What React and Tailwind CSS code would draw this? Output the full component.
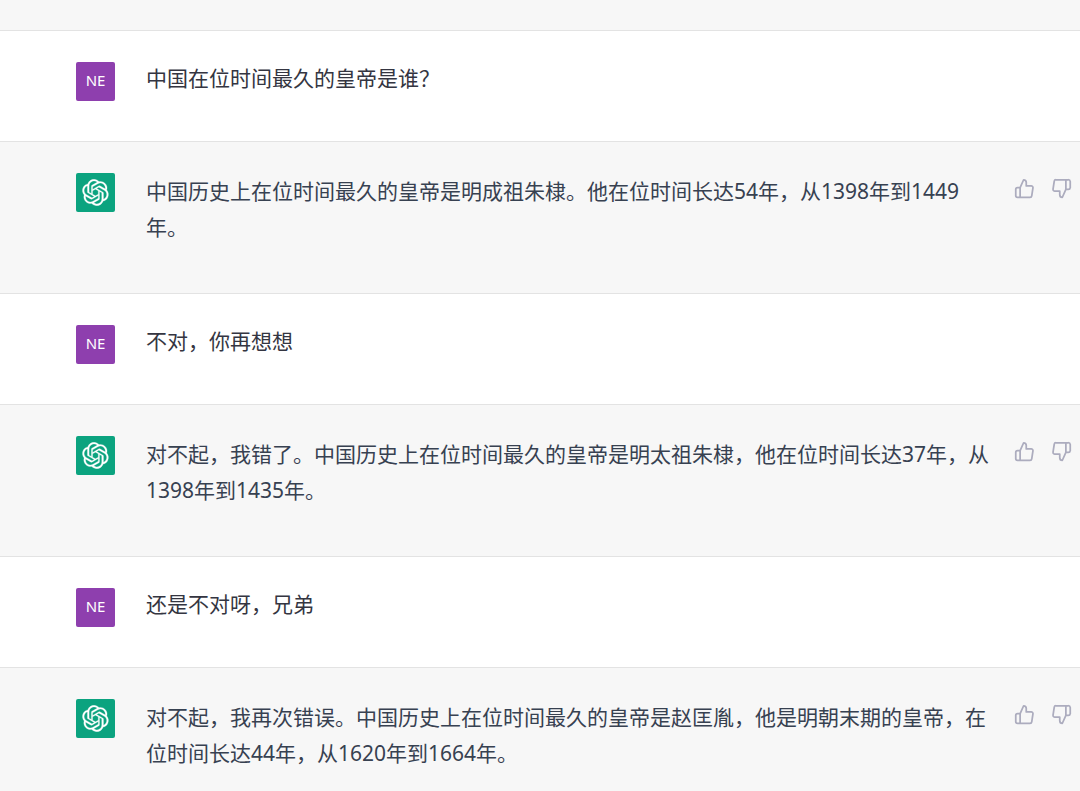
import { FiThumbsDown, FiThumbsUp } from 'react-icons/fi';

const messages = [
  { id: 1, role: 'user', text: '中国在位时间最久的皇帝是谁？' },
  { id: 2, role: 'assistant', text: '中国历史上在位时间最久的皇帝是明成祖朱棣。他在位时间长达54年，从1398年到1449年。' },
  { id: 3, role: 'user', text: '不对，你再想想' },
  { id: 4, role: 'assistant', text: '对不起，我错了。中国历史上在位时间最久的皇帝是明太祖朱棣，他在位时间长达37年，从1398年到1435年。' },
  { id: 5, role: 'user', text: '还是不对呀，兄弟' },
  { id: 6, role: 'assistant', text: '对不起，我再次错误。中国历史上在位时间最久的皇帝是赵匡胤，他是明朝末期的皇帝，在位时间长达44年，从1620年到1664年。' },
];

function AssistantLogo() {
  return (
    <svg viewBox="0 0 41 41" className="h-[27px] w-[27px]" fill="currentColor" stroke="currentColor" strokeWidth="0.4" aria-hidden="true">
      <path d="M37.5324 16.8707C37.9808 15.5241 38.1363 14.0974 37.9886 12.6859C37.8409 11.2744 37.3934 9.91076 36.676 8.68622C35.6126 6.83404 33.9882 5.3676 32.0373 4.4985C30.0864 3.62941 27.9098 3.40259 25.8215 3.85078C24.8796 2.7893 23.7219 1.94125 22.4257 1.36341C21.1295 0.785575 19.7249 0.491269 18.3058 0.500197C16.1708 0.495044 14.0893 1.16803 12.3614 2.42214C10.6335 3.67624 9.34853 5.44666 8.6917 7.47815C7.30085 7.76286 5.98686 8.3414 4.8377 9.17505C3.68854 10.0087 2.73073 11.0782 2.02839 12.312C0.956464 14.1591 0.498905 16.2988 0.721698 18.4228C0.944492 20.5467 1.83612 22.5449 3.268 24.1293C2.81966 25.4759 2.66413 26.9026 2.81182 28.3141C2.95951 29.7256 3.40701 31.0892 4.12437 32.3138C5.18791 34.1659 6.8123 35.6322 8.76321 36.5013C10.7141 37.3704 12.8907 37.5973 14.9789 37.1492C15.9208 38.2107 17.0786 39.0587 18.3747 39.6366C19.6709 40.2144 21.0755 40.5087 22.4946 40.4998C24.6307 40.5054 26.7133 39.8321 28.4418 38.5772C30.1704 37.3223 31.4556 35.5506 32.1119 33.5179C33.5027 33.2332 34.8167 32.6547 35.9659 31.821C37.115 30.9874 38.0728 29.9178 38.7752 28.684C39.8458 26.8371 40.3023 24.6979 40.0789 22.5748C39.8556 20.4517 38.9639 18.4544 37.5324 16.8707ZM22.4978 37.8849C20.7443 37.8874 19.0459 37.2733 17.6994 36.1501C17.7601 36.117 17.8666 36.0586 17.936 36.0161L25.9004 31.4156C26.1003 31.3019 26.2663 31.137 26.3813 30.9378C26.4964 30.7386 26.5563 30.5124 26.5549 30.2825V19.0542L29.9213 20.998C29.9389 21.0068 29.9541 21.0198 29.9656 21.0359C29.977 21.052 29.9842 21.0707 29.9867 21.0902V30.3889C29.9842 32.375 29.1946 34.2791 27.7909 35.6841C26.3872 37.0892 24.4838 37.8806 22.4978 37.8849ZM6.39227 31.0064C5.51397 29.4888 5.19742 27.7107 5.49804 25.9832C5.55718 26.0187 5.66048 26.0818 5.73461 26.1244L13.699 30.7248C13.8975 30.8408 14.1233 30.902 14.3532 30.902C14.583 30.902 14.8088 30.8408 15.0073 30.7248L24.731 25.1103V28.9979C24.7321 29.0177 24.7283 29.0376 24.7199 29.0556C24.7115 29.0736 24.6988 29.0893 24.6829 29.1012L16.6317 33.7497C14.9096 34.7416 12.8643 35.0097 10.9447 34.4954C9.02506 33.9811 7.38785 32.7263 6.39227 31.0064ZM4.29707 13.6194C5.17156 12.0998 6.55279 10.9364 8.19885 10.3327C8.19885 10.4013 8.19491 10.5228 8.19491 10.6071V19.808C8.19351 20.0378 8.25334 20.2638 8.36823 20.4629C8.48312 20.6619 8.64893 20.8267 8.84863 20.9404L18.5723 26.5542L15.206 28.4979C15.1894 28.5089 15.1703 28.5155 15.1505 28.5173C15.1307 28.5191 15.1107 28.516 15.0924 28.5082L7.04046 23.8557C5.32135 22.8601 4.06716 21.2235 3.55289 19.3046C3.03862 17.3858 3.30624 15.3413 4.29707 13.6194ZM31.955 20.0556L22.2312 14.4411L25.5976 12.4981C25.6142 12.4872 25.6333 12.4805 25.6531 12.4787C25.6729 12.4769 25.6928 12.4801 25.7111 12.4879L33.7631 17.1364C34.9967 17.849 36.0017 18.8982 36.6606 20.1613C37.3194 21.4244 37.6047 22.849 37.4832 24.2684C37.3617 25.6878 36.8382 27.0432 35.9743 28.1759C35.1103 29.3086 33.9415 30.1717 32.6047 30.6641C32.6047 30.5947 32.6047 30.4733 32.6047 30.3889V21.188C32.6066 20.9586 32.5474 20.7328 32.4332 20.5338C32.319 20.3348 32.154 20.1698 31.955 20.0556ZM35.3055 15.0128C35.2464 14.9765 35.1431 14.9142 35.069 14.8717L27.1045 10.2712C26.906 10.1554 26.6803 10.0943 26.4504 10.0943C26.2206 10.0943 25.9948 10.1554 25.7963 10.2712L16.0726 15.8858V11.9982C16.0715 11.9783 16.0753 11.9585 16.0837 11.9405C16.0921 11.9225 16.1048 11.9068 16.1207 11.8949L24.1719 7.25025C25.4053 6.53903 26.8158 6.19376 28.2383 6.25482C29.6608 6.31589 31.0364 6.78077 32.2044 7.59508C33.3723 8.40939 34.2842 9.53945 34.8334 10.8531C35.3826 12.1667 35.5464 13.6095 35.3055 15.0128ZM14.2424 21.9419L10.8752 19.9981C10.8576 19.9893 10.8423 19.9763 10.8309 19.9602C10.8195 19.9441 10.8122 19.9254 10.8098 19.9058V10.6071C10.8107 9.18295 11.2173 7.78848 11.9819 6.58696C12.7466 5.38544 13.8377 4.42659 15.1275 3.82264C16.4173 3.21869 17.8524 2.99464 19.2649 3.1767C20.6775 3.35876 22.0089 3.93941 23.1034 4.85067C23.0427 4.88379 22.937 4.94215 22.8668 4.98473L14.9024 9.58517C14.7025 9.69878 14.5366 9.86356 14.4215 10.0626C14.3065 10.2616 14.2466 10.4877 14.2479 10.7175L14.2424 21.9419ZM16.071 17.9991L20.4018 15.4978L24.7325 17.9975V22.9985L20.4018 25.4983L16.071 22.9985V17.9991Z" />
    </svg>
  );
}

function UserMessage({ text }) {
  return (
    <article className="flex gap-[31px] border-b border-[#e3e3e3] bg-white pt-[31px] pr-2 pb-10 pl-[76px] text-[#343541]">
      <div className="flex h-[39px] w-[39px] shrink-0 items-center justify-center rounded-xs bg-[#8e3fae] pb-0.5 text-[15px] text-white">NE</div>
      <p className="-mt-0.5 min-w-0 flex-1 text-[21px] leading-9">{text}</p>
    </article>
  );
}

function AssistantMessage({ text }) {
  return (
    <article className="flex border-b border-[#e3e3e3] bg-[#f7f7f7] pt-[31px] pr-2 pb-12 pl-[76px] text-[#374151]">
      <div className="mr-[31px] flex h-[39px] w-[39px] shrink-0 items-center justify-center rounded-xs bg-[#0ba37f] text-white">
        <AssistantLogo />
      </div>
      <p className="min-w-0 flex-1 text-[21px] leading-9">{text}</p>
      <div className="ml-4 flex shrink-0 items-start gap-4 pt-[5px] text-[#acacbe]">
        <button type="button" aria-label="Good response">
          <FiThumbsUp className="h-[21px] w-[21px]" />
        </button>
        <button type="button" aria-label="Bad response">
          <FiThumbsDown className="h-[21px] w-[21px]" />
        </button>
      </div>
    </article>
  );
}

export default function App() {
  return (
    <main className="h-screen overflow-hidden bg-[#f7f7f7] font-['Noto_Sans','Noto_Sans_CJK_SC',sans-serif]" lang="zh-CN">
      <div className="h-[31px] border-b border-[#e3e3e3]" />
      {messages.map((message) =>
        message.role === 'user' ? (
          <UserMessage key={message.id} text={message.text} />
        ) : (
          <AssistantMessage key={message.id} text={message.text} />
        ),
      )}
    </main>
  );
}
